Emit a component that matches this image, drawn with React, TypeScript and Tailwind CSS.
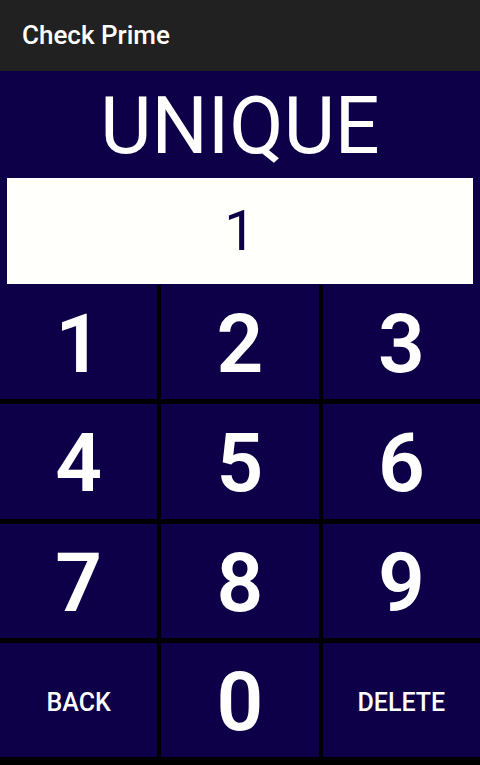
import { useState } from "react";

const keys = ["1", "2", "3", "4", "5", "6", "7", "8", "9", "BACK", "0", "DELETE"];

export default function App() {
  const [value, setValue] = useState("1");

  const press = (k: string) => {
    if (k === "DELETE") setValue((v) => v.slice(0, -1));
    else if (k === "BACK") setValue("");
    else setValue((v) => v + k);
  };

  return (
    <div className="w-[480px] h-[765px] flex flex-col bg-black font-['Roboto',sans-serif] overflow-hidden">
      <div className="h-[71px] shrink-0 bg-[#212121] flex items-center px-[22px]">
        <span className="text-white text-[26px] font-medium">Check Prime</span>
      </div>
      <div className="bg-[#0e0048] flex flex-col">
        <div className="h-[107px] flex items-center justify-center pt-[4px]">
          <span className="text-white text-[79px] leading-none">UNIQUE</span>
        </div>
        <div className="px-[7px] pb-px">
          <div className="h-[106px] bg-[#fffffc] flex items-center justify-center">
            <span className="text-[#0e0048] text-[56px] leading-none">{value}</span>
          </div>
        </div>
      </div>
      <div className="flex-1 grid grid-cols-3 grid-rows-4 gap-x-[4px] gap-y-[5px] pb-[8px]">
        {keys.map((k) => (
          <button
            key={k}
            onClick={() => press(k)}
            className={
              "bg-[#0e0048] text-white flex items-center justify-center leading-none " +
              (k.length > 1 ? "text-[25px] font-medium pt-[6px]" : "text-[82px] font-semibold pt-[4px]")
            }
          >
            {k}
          </button>
        ))}
      </div>
    </div>
  );
}
